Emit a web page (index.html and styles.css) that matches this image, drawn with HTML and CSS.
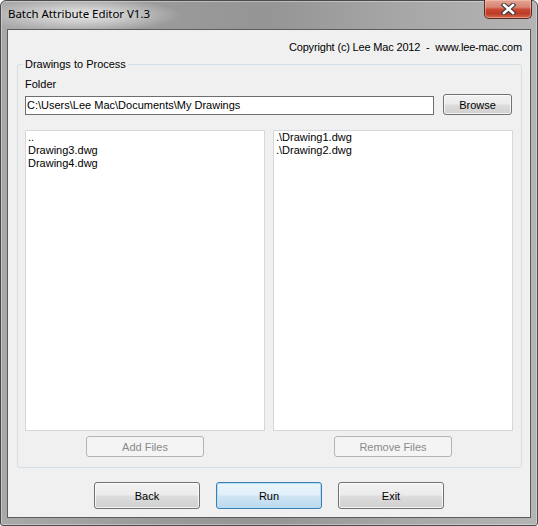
FILE: index.html
```html
<!DOCTYPE html>
<html>
<head>
<meta charset="utf-8">
<title>Batch Attribute Editor V1.3</title>
<link rel="stylesheet" href="styles.css">
</head>
<body>
<div class="window">
  <div class="titlebar">
    <span class="title">Batch Attribute Editor V1.3</span>
    <div class="close">
      <svg width="15" height="12" viewBox="0 0 15 12">
        <path d="M3 2 L12 10 M12 2 L3 10" stroke="#3a3a3a" stroke-width="4.6" stroke-linecap="square" fill="none"/>
        <path d="M3 2 L12 10 M12 2 L3 10" stroke="#ffffff" stroke-width="2.6" stroke-linecap="square" fill="none"/>
      </svg>
    </div>
  </div>
  <div class="client">
    <div class="copyright">Copyright (c) Lee Mac 2012&nbsp; -&nbsp; www.lee-mac.com</div>
    <fieldset class="group">
      <legend class="group-title">Drawings to Process</legend>
      <div class="label">Folder</div>
      <div class="folder-row">
        <div class="textbox">C:\Users\Lee Mac\Documents\My Drawings</div>
        <button class="btn browse">Browse</button>
      </div>
      <div class="lists">
        <div class="col">
          <div class="listbox">
            <div class="item">..</div>
            <div class="item">Drawing3.dwg</div>
            <div class="item">Drawing4.dwg</div>
          </div>
          <button class="btn small" disabled>Add Files</button>
        </div>
        <div class="col">
          <div class="listbox">
            <div class="item">.\Drawing1.dwg</div>
            <div class="item">.\Drawing2.dwg</div>
          </div>
          <button class="btn small" disabled>Remove Files</button>
        </div>
      </div>
    </fieldset>
    <div class="actions">
      <button class="btn big">Back</button>
      <button class="btn big default">Run</button>
      <button class="btn big">Exit</button>
    </div>
  </div>
</div>
</body>
</html>
```
FILE: styles.css
```css
html, body {
  margin: 0;
  padding: 0;
  background: #ffffff;
}

.window {
  box-sizing: border-box;
  width: 538px;
  height: 526px;
  border: 1px solid #4a4a4a;
  border-radius: 6px 6px 3px 3px;
  background: linear-gradient(to right, #a9a9a9 0%, #9a9a9a 30%, #959595 50%, #a7a7a7 75%, #b4b4b4 100%);
  box-shadow: inset 0 0 0 1px rgba(255, 255, 255, 0.35);
  padding: 0 6px 7px 6px;
  display: flex;
  flex-direction: column;
  font-family: "Liberation Sans", Arial, sans-serif;
  font-size: 11px;
  color: #000;
}

.titlebar {
  height: 28px;
  margin: 0 -6px;
  padding: 0 5px 0 7px;
  display: flex;
  justify-content: space-between;
  align-items: flex-start;
  background: radial-gradient(ellipse 100px 17px at 80px 14px, rgba(236, 236, 236, 0.95) 0%, rgba(220, 220, 220, 0.7) 45%, rgba(200, 200, 200, 0) 100%);
}

.title {
  font-family: "Noto Sans", "Open Sans", sans-serif;
  font-size: 11.5px;
  letter-spacing: -0.05px;
  line-height: 16px;
  padding-top: 5px;
  color: #000;
}

.close {
  width: 46px;
  height: 18px;
  margin-top: -1px;
  border: 1px solid #5e2a22;
  border-top: none;
  border-radius: 0 0 5px 5px;
  background: linear-gradient(#e3a393 0%, #d88473 40%, #c84a35 52%, #bd3a26 75%, #d26a4e 100%);
  box-shadow: inset 0 0 0 1px rgba(255, 210, 200, 0.45);
  display: flex;
  align-items: center;
  justify-content: center;
}

.close svg {
  display: block;
}

.client {
  flex: 1;
  border: 1px solid #5c5c5c;
  background: #f0f0f0;
  display: flex;
  flex-direction: column;
}

.copyright {
  padding: 11px 8px 0 0;
  line-height: 13px;
  text-align: right;
  white-space: nowrap;
  letter-spacing: -0.17px;
}

.group {
  margin: 4px 8px 0 9px;
  padding: 7px 8px 10px 7px;
  border: 1px solid #d5dfe5;
  border-radius: 3px;
  min-width: 0;
}

.group-title {
  padding: 0 2px;
  margin-left: -2px;
  line-height: 13px;
}

.label {
  line-height: 13px;
}

.folder-row {
  margin-top: 3px;
  display: flex;
  align-items: flex-end;
  gap: 9px;
  padding-right: 1px;
}

.textbox {
  flex: 1;
  height: 19px;
  box-sizing: border-box;
  border: 1px solid #6e6e6e;
  background: #fff;
  padding-left: 1px;
  line-height: 17px;
  white-space: nowrap;
}

.btn {
  box-sizing: border-box;
  font-family: "Liberation Sans", Arial, sans-serif;
  font-size: 11px;
  color: #000;
  border: 1px solid #707070;
  border-radius: 3px;
  background: linear-gradient(#f2f2f2 0%, #ebebeb 48%, #dddddd 52%, #cfcfcf 100%);
  box-shadow: inset 0 0 0 1px rgba(255, 255, 255, 0.75);
  padding: 0;
  margin: 0;
}

.browse {
  width: 69px;
  height: 21px;
}

.lists {
  margin-top: 15px;
  display: flex;
  gap: 8px;
}

.col {
  width: 240px;
  display: flex;
  flex-direction: column;
  align-items: center;
  gap: 5px;
}

.listbox {
  box-sizing: border-box;
  align-self: stretch;
  height: 301px;
  border: 1px solid #d4d7dc;
  background: #fff;
  padding: 0 0 0 2px;
}

.item {
  line-height: 13px;
  white-space: nowrap;
}

.small {
  width: 118px;
  height: 21px;
}

.btn:disabled {
  color: #8a8a8a;
  border-color: #b1b5b8;
  background: #f4f4f4;
  box-shadow: none;
}

.actions {
  margin-top: 14px;
  display: flex;
  justify-content: center;
  gap: 16px;
}

.big {
  width: 106px;
  height: 27px;
}

.default {
  border-color: #3c7fb1;
  background: linear-gradient(#eaf5fc 0%, #e0eff9 48%, #cfe5f4 52%, #bcd9ee 100%);
  box-shadow: inset 0 0 0 1px #b4dcf5;
}
```
